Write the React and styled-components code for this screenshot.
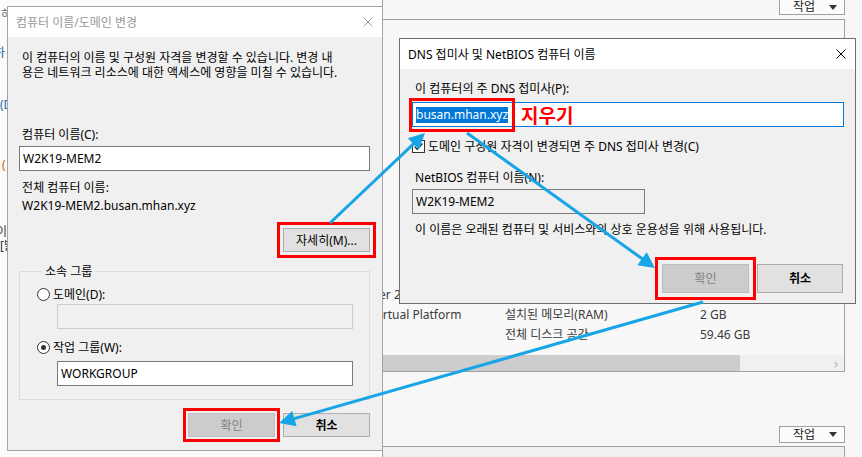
import React from "react";
import styled, { createGlobalStyle } from "styled-components";

const GlobalStyle = createGlobalStyle`
  html, body {
    margin: 0;
    padding: 0;
  }
  body {
    font-family: "Noto Sans", "Noto Sans CJK KR", sans-serif;
    font-size: 12px;
    color: #000;
    background: #f7f7f7;
  }
`;

const Desktop = styled.div`
  position: relative;
  width: 862px;
  height: 457px;
  overflow: hidden;
  background: #f7f7f7;
`;

/* ---------- server manager behind the dialogs ---------- */

const Backdrop = styled.div`
  display: flex;
  height: 100%;
`;

const SideStrip = styled.div`
  width: 382px;
  flex-shrink: 0;
  display: flex;
  flex-direction: column;
  background: #fbfbfb;
`;

const StripText = styled.span`
  margin-top: ${(p) => p.$top}px;
  margin-left: ${(p) => p.$shift || 0}px;
  color: ${(p) => p.$color || "#333"};
  line-height: 14px;
  white-space: nowrap;
`;

const Main = styled.div`
  flex: 1;
  display: flex;
  flex-direction: column;
  border-left: 1px solid #a0a0a0;
  padding-right: 17px;
`;

const Toolbar = styled.div`
  display: flex;
  justify-content: flex-end;
  align-items: flex-start;
  height: ${(p) => p.$height}px;
  margin-top: ${(p) => p.$gap || 0}px;
`;

const ActionButton = styled.div`
  box-sizing: border-box;
  width: 66px;
  height: ${(p) => p.$height}px;
  margin-top: ${(p) => p.$offset || 0}px;
  border: 1px solid #a0a0a0;
  background: #fbfbfb;
  display: flex;
  align-items: center;
  justify-content: space-between;
  padding: 0 7px 0 13px;
  color: #222;
  line-height: 14px;
`;

const DropArrow = styled.span`
  width: 0;
  height: 0;
  border-left: 4px solid transparent;
  border-right: 4px solid transparent;
  border-top: 5px solid #333;
`;

const PropPanel = styled.div`
  box-sizing: border-box;
  height: 353px;
  border: 1px solid #a0a0a0;
  border-left: none;
  background: #f8f8f8;
  display: flex;
  flex-direction: column;
  justify-content: flex-end;
  overflow: hidden;
`;

const PropGrid = styled.div`
  display: grid;
  grid-template-columns: 261px 195px 1fr;
  margin-left: -139px;
  margin-bottom: 10px;
  line-height: 20px;
  color: #3a3a3a;
  white-space: nowrap;
`;

const PropCell = styled.span`
  padding-left: ${(p) => p.$lead || 0}px;
`;

const HScroll = styled.div`
  display: flex;
  height: 16px;
  background: #f0f0f0;
`;

const Thumb = styled.div`
  width: 357px;
  background: #cdcdcd;
`;

const ScrollChevron = styled.span`
  margin-left: auto;
  width: 16px;
  display: flex;
  align-items: center;
  justify-content: center;
  color: #a8a8a8;
  font-size: 12px;
`;

const LowerPanel = styled.div`
  flex: 1;
  margin-top: 3px;
  border-top: 1px solid #a0a0a0;
  border-right: 1px solid #a0a0a0;
  background: #f0f0f0;
`;

/* ---------- dialog windows ---------- */

const Window = styled.div`
  position: absolute;
  left: ${(p) => p.$x}px;
  top: ${(p) => p.$y}px;
  width: ${(p) => p.$w}px;
  height: ${(p) => p.$h}px;
  box-sizing: border-box;
  border: 1px solid ${(p) => (p.$active ? "#6f6f6f" : "#a4a4a4")};
  background: #f0f0f0;
  display: flex;
  flex-direction: column;
`;

const TitleBar = styled.div`
  height: 30px;
  flex-shrink: 0;
  background: #fff;
  display: flex;
  align-items: center;
  justify-content: space-between;
  padding: 0 9px 0 8px;
  color: ${(p) => (p.$active ? "#000" : "#999")};
  line-height: 15px;
`;

const Body = styled.div`
  display: flex;
  flex-direction: column;
  padding: ${(p) => p.$pad};
`;

const Text = styled.div`
  line-height: 15px;
  margin-top: ${(p) => p.$top || 0}px;
  white-space: nowrap;
`;

const Field = styled.div`
  box-sizing: border-box;
  height: 25px;
  margin-top: ${(p) => p.$top || 0}px;
  margin-left: ${(p) => p.$indent || 0}px;
  width: ${(p) => (p.$width ? `${p.$width}px` : "auto")};
  border: 1px solid
    ${(p) => (p.$focus ? "#0078d7" : p.$disabled ? "#cccccc" : "#7a7a7a")};
  background: ${(p) => (p.$readonly || p.$disabled ? "#f0f0f0" : "#fff")};
  display: flex;
  align-items: center;
  padding: 0 3px;
  line-height: 15px;
  white-space: nowrap;
`;

const Selection = styled.span`
  position: relative;
  background: #0078d7;
  color: #fff;
  line-height: 16px;
  &::after {
    content: "";
    position: absolute;
    top: -9px;
    bottom: -9px;
    left: -7px;
    right: -7px;
    border: 3px solid #ff0000;
  }
`;

const Callout = styled.span`
  margin-left: 13px;
  color: #ff0000;
  font-family: "Noto Sans CJK KR", sans-serif;
  font-weight: 700;
  font-size: 19px;
  line-height: 20px;
`;

const ButtonRow = styled.div`
  display: flex;
  justify-content: flex-end;
  gap: 8px;
  margin-top: ${(p) => p.$top || 0}px;
  margin-right: ${(p) => p.$right || 0}px;
`;

const Button = styled.div`
  box-sizing: border-box;
  width: ${(p) => p.$w || 87}px;
  height: ${(p) => p.$h || 24}px;
  border: 1px solid ${(p) => (p.$disabled ? "#bfbfbf" : "#adadad")};
  background: ${(p) => (p.$disabled ? "#cccccc" : "#e1e1e1")};
  color: ${(p) => (p.$disabled ? "#838383" : "#000")};
  font-weight: ${(p) => (p.$bold ? 700 : 400)};
  display: flex;
  align-items: center;
  justify-content: center;
  line-height: 15px;
  outline: ${(p) => (p.$ring !== undefined ? "3px solid #ff0000" : "none")};
  outline-offset: ${(p) => p.$ring || 0}px;
`;

const GroupBox = styled.fieldset`
  margin: 12px 0 0;
  padding: 0 16px 13px 17px;
  border: 1px solid #dcdcdc;
  display: flex;
  flex-direction: column;
  min-width: 0;
`;

const Legend = styled.legend`
  margin-left: 5px;
  padding: 0 3px;
  line-height: 15px;
`;

const OptionRow = styled.label`
  display: flex;
  align-items: center;
  gap: ${(p) => p.$gap || 3}px;
  margin-top: ${(p) => p.$top || 0}px;
  line-height: 15px;
  white-space: nowrap;
`;

const Radio = styled.span`
  box-sizing: border-box;
  width: 13px;
  height: 13px;
  flex-shrink: 0;
  border-radius: 50%;
  border: 1px solid #333;
  background: #fff;
  display: flex;
  align-items: center;
  justify-content: center;
  &::after {
    content: "";
    width: 5px;
    height: 5px;
    border-radius: 50%;
    background: ${(p) => (p.$checked ? "#333" : "transparent")};
  }
`;

const CheckBox = styled.span`
  box-sizing: border-box;
  width: 13px;
  height: 13px;
  flex-shrink: 0;
  border: 1px solid #333;
  background: #fff;
  display: flex;
  align-items: center;
  justify-content: center;
`;

const Overlay = styled.svg`
  position: absolute;
  left: 0;
  top: 0;
  width: 862px;
  height: 457px;
  pointer-events: none;
`;

const CloseIcon = ({ color }) => (
  <svg width="10" height="10" viewBox="0 0 10 10">
    <path d="M0.5 0.5L9.5 9.5M9.5 0.5L0.5 9.5" stroke={color} strokeWidth="1" fill="none" />
  </svg>
);

const Arrow = ({ from, to }) => {
  const dx = to[0] - from[0];
  const dy = to[1] - from[1];
  const len = Math.hypot(dx, dy);
  const ux = dx / len;
  const uy = dy / len;
  const bx = to[0] - ux * 16;
  const by = to[1] - uy * 16;
  const head = [
    [to[0], to[1]],
    [bx - uy * 8, by + ux * 8],
    [bx + uy * 8, by - ux * 8],
  ]
    .map((p) => p.join(","))
    .join(" ");
  return (
    <g>
      <line x1={from[0]} y1={from[1]} x2={bx + ux * 2} y2={by + uy * 2} stroke="#17a5e6" strokeWidth="3" />
      <polygon points={head} fill="#17a5e6" />
    </g>
  );
};

const arrows = [
  { from: [330, 223], to: [425, 133] },
  { from: [467, 133], to: [655, 268] },
  { from: [703, 302], to: [279, 423] },
];

const props = [
  [{ text: "Microsoft Windows Server 2019 Datacenter" }, { text: "" }, { text: "" }],
  [{ text: "VMware, Inc. VMware Virtual Platform", lead: 4 }, { text: "설치된 메모리(RAM)" }, { text: "2 GB" }],
  [{ text: "" }, { text: "전체 디스크 공간" }, { text: "59.46 GB" }],
];

export default function App() {
  return (
    <Desktop>
      <GlobalStyle />
      <Backdrop>
        <SideStrip>
          <StripText $top={8} $shift={1} $color="#666">하</StripText>
          <StripText $top={24} $shift={-6} $color="#1d5fa8">하</StripText>
          <StripText $top={38} $shift={0} $color="#1d5fa8">(D</StripText>
          <StripText $top={46} $shift={2} $color="#c06010">(</StripText>
          <StripText $top={53} $shift={-4}>이름</StripText>
          <StripText $top={0} $shift={0}>[밝</StripText>
        </SideStrip>
        <Main>
          <Toolbar $height={19}>
            <ActionButton $height={16} $offset={-1}>
              작업 <DropArrow />
            </ActionButton>
          </Toolbar>
          <PropPanel>
            <PropGrid>
              {props.map((row, i) =>
                row.map((cell, j) => (
                  <PropCell key={`${i}-${j}`} $lead={cell.lead}>
                    {cell.text}
                  </PropCell>
                ))
              )}
            </PropGrid>
            <HScroll>
              <Thumb />
              <ScrollChevron>›</ScrollChevron>
            </HScroll>
          </PropPanel>
          <Toolbar $height={17} $gap={54}>
            <ActionButton $height={17}>
              작업 <DropArrow />
            </ActionButton>
          </Toolbar>
          <LowerPanel />
        </Main>
      </Backdrop>

      <Window $x={7} $y={6} $w={376} $h={445}>
        <TitleBar>
          <span>컴퓨터 이름/도메인 변경</span>
          <CloseIcon color="#999" />
        </TitleBar>
        <Body $pad="13px 12px 0 11px">
          <Text $top={0}>
            &nbsp;이 컴퓨터의 이름 및 구성원 자격을 변경할 수 있습니다. 변경 내
            <br />
            &nbsp;용은 네트워크 리소스에 대한 액세스에 영향을 미칠 수 있습니다.
          </Text>
          <Text $top={47}>&nbsp;컴퓨터 이름(C):</Text>
          <Field $top={4}>W2K19-MEM2</Field>
          <Text $top={9}>&nbsp;전체 컴퓨터 이름:</Text>
          <Text $top={3}>&nbsp;W2K19-MEM2.busan.mhan.xyz</Text>
          <ButtonRow $top={15}>
            <Button $ring={3}>자세히(M)...</Button>
          </ButtonRow>
          <GroupBox>
            <Legend>소속 그룹</Legend>
            <OptionRow $top={8}>
              <Radio />
              도메인(D):
            </OptionRow>
            <Field $top={2} $indent={20} $disabled />
            <OptionRow $top={11}>
              <Radio $checked />
              작업 그룹(W):
            </OptionRow>
            <Field $top={6} $indent={20}>WORKGROUP</Field>
          </GroupBox>
          <ButtonRow $top={13}>
            <Button $disabled $ring={2}>확인</Button>
            <Button $bold>취소</Button>
          </ButtonRow>
        </Body>
      </Window>

      <Window $x={399} $y={38} $w={457} $h={266} $active>
        <TitleBar $active>
          <span>DNS 접미사 및 NetBIOS 컴퓨터 이름</span>
          <CloseIcon color="#000" />
        </TitleBar>
        <Body $pad="12px 11px 0 12px">
          <Text>&nbsp;이 컴퓨터의 주 DNS 접미사(P):</Text>
          <Field $top={6} $focus>
            <Selection>busan.mhan.xyz</Selection>
            <Callout>지우기</Callout>
          </Field>
          <OptionRow $top={12} $gap={3}>
            <CheckBox>
              <svg width="11" height="11" viewBox="0 0 11 11">
                <path d="M1.5 5.5L4.2 8.3L9.5 2.5" stroke="#222" strokeWidth="1.2" fill="none" />
              </svg>
            </CheckBox>
            도메인 구성원 자격이 변경되면 주 DNS 접미사 변경(C)
          </OptionRow>
          <Text $top={16}>&nbsp;NetBIOS 컴퓨터 이름(N):</Text>
          <Field $top={4} $width={233} $readonly>W2K19-MEM2</Field>
          <Text $top={8}>&nbsp;이 이름은 오래된 컴퓨터 및 서비스와의 상호 운용성을 위해 사용됩니다.</Text>
          <ButtonRow $top={27} $right={1}>
            <Button $disabled $w={87} $h={29} $ring={4}>확인</Button>
            <Button $bold $w={86} $h={29}>취소</Button>
          </ButtonRow>
        </Body>
      </Window>

      <Overlay viewBox="0 0 862 457">
        {arrows.map((a, i) => (
          <Arrow key={i} from={a.from} to={a.to} />
        ))}
      </Overlay>
    </Desktop>
  );
}
